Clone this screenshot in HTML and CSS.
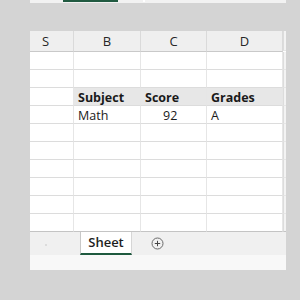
FILE: index.html
```html
<!DOCTYPE html>
<html>
<head>
<meta charset="utf-8">
<link rel="stylesheet" href="styles.css">
</head>
<body>
<div class="top"><span class="top-line"></span><span class="top-blip"></span></div>
<div class="book">
  <div class="grid">
    <div class="hd s">S</div><div class="hd">B</div><div class="hd">C</div><div class="hd">D</div><div class="edge hd-edge"></div>

    <div class="c"></div><div class="c"></div><div class="c"></div><div class="c"></div><div class="edge"></div>
    <div class="c"></div><div class="c"></div><div class="c"></div><div class="c"></div><div class="edge"></div>
    <div class="c"></div><div class="c th">Subject</div><div class="c th">Score</div><div class="c th">Grades</div><div class="edge"></div>
    <div class="c"></div><div class="c">Math</div><div class="c num">92</div><div class="c">A</div><div class="edge"></div>
    <div class="c"></div><div class="c"></div><div class="c"></div><div class="c"></div><div class="edge"></div>
    <div class="c"></div><div class="c"></div><div class="c"></div><div class="c"></div><div class="edge"></div>
    <div class="c"></div><div class="c"></div><div class="c"></div><div class="c"></div><div class="edge"></div>
    <div class="c"></div><div class="c"></div><div class="c"></div><div class="c"></div><div class="edge"></div>
    <div class="c"></div><div class="c"></div><div class="c"></div><div class="c"></div><div class="edge"></div>
    <div class="c last"></div><div class="c last"></div><div class="c last"></div><div class="c last"></div><div class="edge last"></div>
  </div>
  <div class="tabs">
    <span class="nav"></span>
    <div class="sheet-tab">Sheet</div>
    <svg class="add" width="13" height="13" viewBox="0 0 13 13">
      <circle cx="6.5" cy="6.5" r="5.5" fill="none" stroke="#6a6a6a" stroke-width="1"/>
      <path d="M6.5 3.8v5.4M3.8 6.5h5.4" stroke="#444" stroke-width="1" fill="none"/>
    </svg>
  </div>
  <div class="status"></div>
</div>
</body>
</html>
```
FILE: styles.css
```css
html, body {
  margin: 0;
  padding: 0;
}
body {
  background: #d4d4d4;
  width: 300px;
  height: 300px;
  overflow: hidden;
  font-family: "Open Sans", "Noto Sans", sans-serif;
  color: #1a1a1a;
}
.top {
  margin-left: 30px;
  width: 256px;
  height: 3px;
  background: #f2f2f2;
  display: flex;
  align-items: flex-start;
}
.top-line {
  margin-left: 33px;
  width: 55px;
  height: 2px;
  background: #215a41;
}
.top-blip {
  margin-left: 25px;
  width: 2px;
  height: 2px;
  background: #ffffff;
}
.book {
  margin-top: 28px;
  margin-left: 30px;
  width: 256px;
  background: #ffffff;
}
.grid {
  display: grid;
  grid-template-columns: 44px 67px 66px 76px 3px;
  grid-template-rows: 21px;
  grid-auto-rows: 18px;
}
.hd {
  height: 20px;
  background: #efefef;
  border-right: 1px solid #dadada;
  border-bottom: 1px solid #c9c9c9;
  font-size: 13px;
  line-height: 21px;
  text-align: center;
  color: #262626;
}
.hd.s {
  text-align: left;
  padding-left: 12px;
}
.hd-edge {
  background: #f0f0f0;
  border-left: 1px solid #d6d6d6;
  border-bottom: 1px solid #c9c9c9;
  height: 20px;
}
.c {
  border-right: 1px solid #e6e6e6;
  border-bottom: 1px solid #dcdcdc;
  font-size: 12.5px;
  line-height: 19px;
  padding-left: 4px;
  white-space: nowrap;
  overflow: hidden;
}
.c.th {
  background: #e7e7e7;
  font-weight: 700;
}
.c.num {
  padding-left: 22px;
}
.edge {
  background: #f3f3f3;
  border-left: 1px solid #dcdcdc;
  border-bottom: 1px solid #e6e6e6;
  box-sizing: border-box;
}
.c.last, .edge.last {
  border-bottom: 1px solid #c4c4c4;
}
.tabs {
  height: 23px;
  background: #f0f0f0;
  display: flex;
  align-items: stretch;
}
.nav {
  margin-left: 15px;
  margin-top: 12px;
  width: 2px;
  height: 2px;
  background: #dcdcdc;
}
.sheet-tab {
  margin-left: 33px;
  width: 50px;
  height: 21px;
  background: #ffffff;
  border-left: 1px solid #c8c8c8;
  border-right: 1px solid #d6d6d6;
  border-bottom: 2px solid #1f5a3f;
  font-size: 13px;
  font-weight: 600;
  line-height: 21px;
  text-align: center;
  color: #1e1e1e;
}
.add {
  margin-left: 19px;
  align-self: center;
}
.status {
  height: 15px;
  background: #f8f8f8;
}
```
